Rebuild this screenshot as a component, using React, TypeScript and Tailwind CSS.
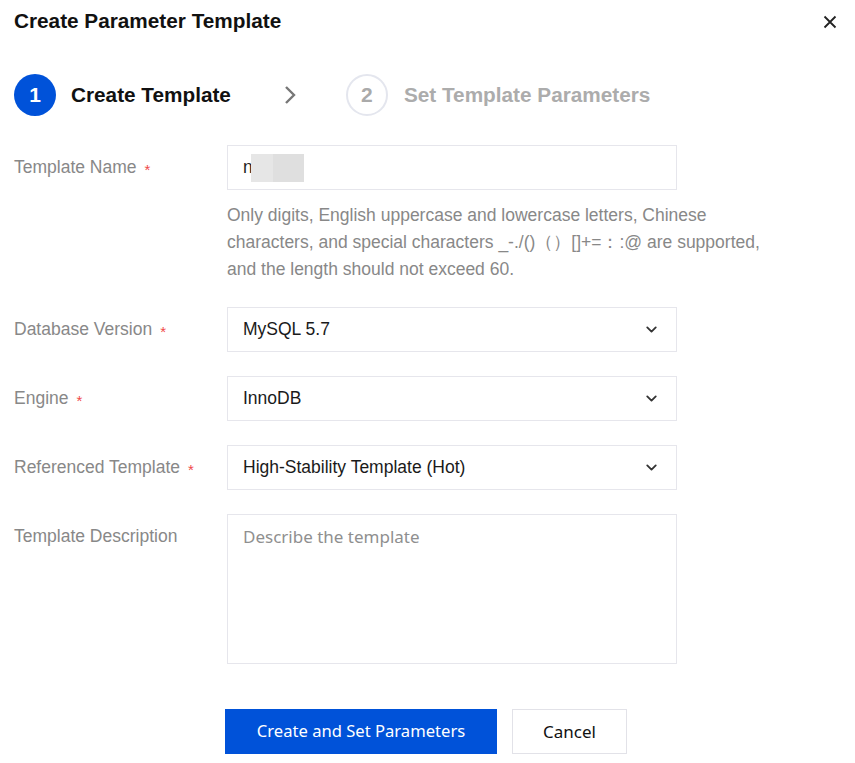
import { ChevronDown } from "lucide-react";

const ARIAL = "font-['Liberation_Sans',Arial,sans-serif]";
const SEGOE = "font-['Noto_Sans','Open_Sans',sans-serif]";

function Label({ text, required = true }: { text: string; required?: boolean }) {
  return (
    <div className={`w-[213px] shrink-0 flex items-center h-[45px] ${ARIAL} text-[17.5px] text-[#888]`}>
      {text}
      {required && <span className="ml-[8px] text-[#f04848] text-[15px] leading-none mt-[3px]">*</span>}
    </div>
  );
}

function Select({ value }: { value: string }) {
  return (
    <div className="w-[450px] h-[45px] border border-[#e6e6ec] flex items-center justify-between pl-[15px] pr-[16px]">
      <span className={`${ARIAL} text-[17.5px] text-[#1a1a1a]`}>{value}</span>
      <ChevronDown className="w-[17px] h-[17px] text-[#333]" strokeWidth={2.6} />
    </div>
  );
}

export default function App() {
  return (
    <div className="w-[855px] h-[763px] bg-white relative overflow-hidden">
      {/* Header */}
      <div className="flex items-center justify-between pl-[14px] pr-[18px] pt-[8px] h-[34px]">
        <h1 className={`${ARIAL} font-bold text-[20.75px] text-[#111]`}>Create Parameter Template</h1>
        <svg width="14" height="14" viewBox="0 0 14 14" className="mt-[1px]">
          <path d="M1.5 1.5 L12.5 12.5 M12.5 1.5 L1.5 12.5" stroke="#222" strokeWidth="1.8" fill="none" />
        </svg>
      </div>

      {/* Steps */}
      <div className="flex items-center pl-[14px] mt-[40px] h-[42px]">
        <div className={`w-[42px] h-[42px] rounded-full bg-[#0052d9] flex items-center justify-center text-white ${ARIAL} font-bold text-[21px]`}>
          1
        </div>
        <span className={`ml-[15px] ${ARIAL} font-bold text-[20.75px] text-[#111]`}>Create Template</span>
        <svg width="14" height="22" viewBox="0 0 14 22" className="ml-[52px]">
          <path d="M3 3 L11 11 L3 19" stroke="#777" strokeWidth="2.4" fill="none" />
        </svg>
        <div className={`ml-[49px] w-[42px] h-[42px] rounded-full border-[2px] border-[#e4e6ee] flex items-center justify-center text-[#aaa] ${ARIAL} font-bold text-[21px]`}>
          2
        </div>
        <span className={`ml-[16px] ${ARIAL} font-bold text-[20.75px] text-[#acacac]`}>Set Template Parameters</span>
      </div>

      {/* Form */}
      <div className="pl-[14px] mt-[29px] flex flex-col">
        <div className="flex">
          <Label text="Template Name" />
          <div className="flex flex-col">
            <div className="w-[450px] h-[45px] border border-[#e6e6ec] flex items-center pl-[15px]">
              <span className={`${ARIAL} text-[17.5px] text-[#1f1f1f]`}>n</span>
              <div className="w-[22px] h-[28px] bg-[#e6e6e6] -ml-[2px]" />
              <div className="w-[31px] h-[28px] bg-[#dfdfdf]" />
            </div>
            <p className={`mt-[12px] w-[560px] ${ARIAL} text-[17.5px] leading-[27px] text-[#888]`}>
              Only digits, English uppercase and lowercase letters, Chinese characters, and special characters _-./()（）[]+=：:@ are supported, and the length should not exceed 60.
            </p>
          </div>
        </div>

        <div className="flex mt-[24px]">
          <Label text="Database Version" />
          <Select value="MySQL 5.7" />
        </div>
        <div className="flex mt-[24px]">
          <Label text="Engine" />
          <Select value="InnoDB" />
        </div>
        <div className="flex mt-[24px]">
          <Label text="Referenced Template" />
          <Select value="High-Stability Template (Hot)" />
        </div>
        <div className="flex mt-[24px]">
          <Label text="Template Description" required={false} />
          <div className={`w-[450px] h-[150px] border border-[#e6e6ec] pl-[15px] pt-[9px] ${SEGOE} text-[17px] text-[#8f8f8f]`}>
            Describe the template
          </div>
        </div>
      </div>

      {/* Footer */}
      <div className="flex pl-[225px] mt-[45px] gap-[15px]">
        <button className={`w-[272px] h-[45px] bg-[#0052d9] text-white ${SEGOE} text-[16.6px]`}>
          Create and Set Parameters
        </button>
        <button className={`w-[115px] h-[45px] bg-white border border-[#e2e2e8] text-[#111] ${SEGOE} text-[17px]`}>
          Cancel
        </button>
      </div>
    </div>
  );
}
